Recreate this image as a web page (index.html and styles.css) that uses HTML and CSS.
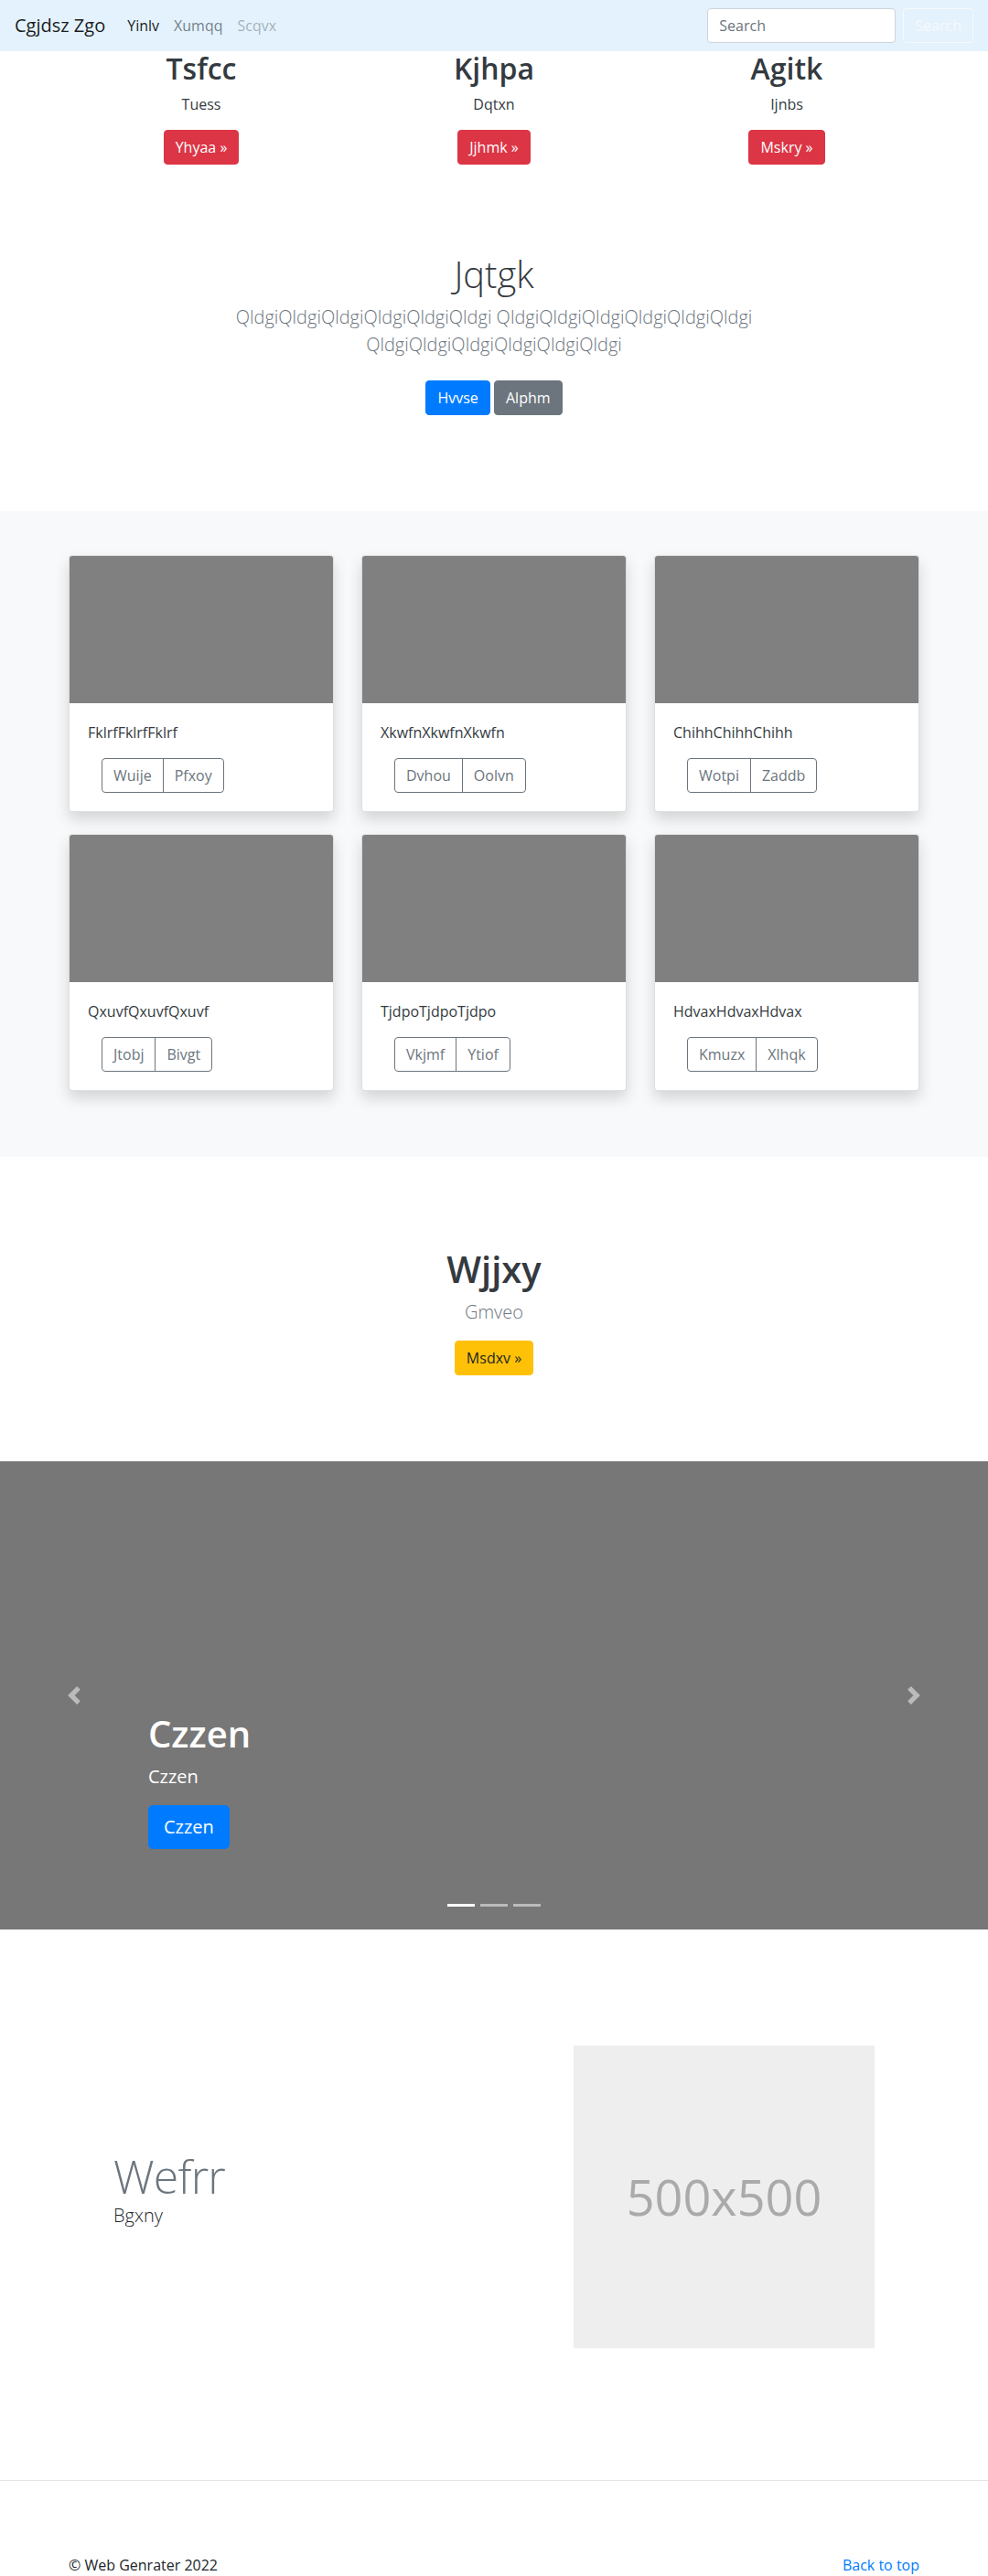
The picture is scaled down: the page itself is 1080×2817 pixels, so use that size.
FILE: index.html
```html
<!DOCTYPE html>
<html lang="en">
<head>
<meta charset="utf-8">
<title>Cgjdsz Zgo</title>
<link rel="stylesheet" href="styles.css">
</head>
<body>
<nav class="navbar">
  <a class="brand" href="#">Cgjdsz Zgo</a>
  <ul class="nav">
    <li><a class="nav-link active" href="#">Yinlv</a></li>
    <li><a class="nav-link" href="#">Xumqq</a></li>
    <li><a class="nav-link disabled" href="#">Scqvx</a></li>
  </ul>
  <form class="search">
    <input class="search-input" type="text" placeholder="Search">
    <button class="btn btn-outline-light" type="button">Search</button>
  </form>
</nav>

<section class="marketing">
  <div class="mk-col">
    <h2 class="mk-title">Tsfcc</h2>
    <p class="mk-text">Tuess</p>
    <p class="mk-action"><a class="btn btn-danger" href="#">Yhyaa &raquo;</a></p>
  </div>
  <div class="mk-col">
    <h2 class="mk-title">Kjhpa</h2>
    <p class="mk-text">Dqtxn</p>
    <p class="mk-action"><a class="btn btn-danger" href="#">Jjhmk &raquo;</a></p>
  </div>
  <div class="mk-col">
    <h2 class="mk-title">Agitk</h2>
    <p class="mk-text">Ijnbs</p>
    <p class="mk-action"><a class="btn btn-danger" href="#">Mskry &raquo;</a></p>
  </div>
</section>

<section class="jumbo">
  <h1 class="jumbo-heading">Jqtgk</h1>
  <p class="jumbo-lead">QldgiQldgiQldgiQldgiQldgiQldgi QldgiQldgiQldgiQldgiQldgiQldgi QldgiQldgiQldgiQldgiQldgiQldgi</p>
  <p class="jumbo-actions"><a class="btn btn-primary" href="#">Hvvse</a> <a class="btn btn-secondary" href="#">Alphm</a></p>
</section>

<section class="album">
  <div class="card-grid">
    <div class="card">
      <div class="card-img"></div>
      <div class="card-body">
        <p class="card-text">FklrfFklrfFklrf</p>
        <div class="btn-group"><a class="btn btn-outline-secondary" href="#">Wuije</a><a class="btn btn-outline-secondary" href="#">Pfxoy</a></div>
      </div>
    </div>
    <div class="card">
      <div class="card-img"></div>
      <div class="card-body">
        <p class="card-text">XkwfnXkwfnXkwfn</p>
        <div class="btn-group"><a class="btn btn-outline-secondary" href="#">Dvhou</a><a class="btn btn-outline-secondary" href="#">Oolvn</a></div>
      </div>
    </div>
    <div class="card">
      <div class="card-img"></div>
      <div class="card-body">
        <p class="card-text">ChihhChihhChihh</p>
        <div class="btn-group"><a class="btn btn-outline-secondary" href="#">Wotpi</a><a class="btn btn-outline-secondary" href="#">Zaddb</a></div>
      </div>
    </div>
    <div class="card">
      <div class="card-img"></div>
      <div class="card-body">
        <p class="card-text">QxuvfQxuvfQxuvf</p>
        <div class="btn-group"><a class="btn btn-outline-secondary" href="#">Jtobj</a><a class="btn btn-outline-secondary" href="#">Bivgt</a></div>
      </div>
    </div>
    <div class="card">
      <div class="card-img"></div>
      <div class="card-body">
        <p class="card-text">TjdpoTjdpoTjdpo</p>
        <div class="btn-group"><a class="btn btn-outline-secondary" href="#">Vkjmf</a><a class="btn btn-outline-secondary" href="#">Ytiof</a></div>
      </div>
    </div>
    <div class="card">
      <div class="card-img"></div>
      <div class="card-body">
        <p class="card-text">HdvaxHdvaxHdvax</p>
        <div class="btn-group"><a class="btn btn-outline-secondary" href="#">Kmuzx</a><a class="btn btn-outline-secondary" href="#">Xlhqk</a></div>
      </div>
    </div>
  </div>
</section>

<section class="cta">
  <h1 class="cta-heading">Wjjxy</h1>
  <p class="cta-lead">Gmveo</p>
  <p class="cta-action"><a class="btn btn-warning" href="#">Msdxv &raquo;</a></p>
</section>

<section class="carousel">
  <ol class="indicators">
    <li class="active"></li>
    <li></li>
    <li></li>
  </ol>
  <div class="caption">
    <h1 class="caption-title">Czzen</h1>
    <p class="caption-text">Czzen</p>
    <p class="caption-action"><a class="btn btn-lg btn-primary" href="#">Czzen</a></p>
  </div>
  <a class="control control-prev" href="#">
    <svg width="20" height="20" viewBox="0 0 8 8"><path fill="#fff" d="M5.25 0l-4 4 4 4 1.5-1.5-2.5-2.5 2.5-2.5-1.5-1.5z"/></svg>
  </a>
  <a class="control control-next" href="#">
    <svg width="20" height="20" viewBox="0 0 8 8"><path fill="#fff" d="M2.75 0l-1.5 1.5 2.5 2.5-2.5 2.5 1.5 1.5 4-4-4-4z"/></svg>
  </a>
</section>

<section class="featurette">
  <div class="feat-text">
    <h2 class="feat-heading">Wefrr</h2>
    <p class="feat-lead">Bgxny</p>
  </div>
  <div class="feat-img"><span>500x500</span></div>
</section>

<hr class="divider">

<footer class="footer">
  <p class="copy">&copy; Web Genrater 2022</p>
  <a class="top-link" href="#">Back to top</a>
</footer>
</body>
</html>
```

FILE: styles.css
```css
* { box-sizing: border-box; }

html, body {
  margin: 0;
  padding: 0;
}

body {
  font-family: "Open Sans", "Noto Sans", "Liberation Sans", sans-serif;
  font-size: 16px;
  line-height: 1.5;
  color: #212529;
  background: #fff;
}

a { text-decoration: none; }

p { margin: 0; }

h1, h2 { margin: 0; }

/* Buttons */
.btn {
  display: inline-block;
  padding: 6px 12px;
  font-size: 16px;
  line-height: 24px;
  font-weight: 400;
  font-family: inherit;
  border: 1px solid transparent;
  border-radius: 4px;
  text-align: center;
  vertical-align: middle;
  cursor: pointer;
}
.btn-lg {
  padding: 8px 16px;
  font-size: 20px;
  line-height: 30px;
  border-radius: 5px;
}
.btn-danger { background: #dc3545; border-color: #dc3545; color: #fff; }
.btn-primary { background: #007bff; border-color: #007bff; color: #fff; }
.btn-secondary { background: #6c757d; border-color: #6c757d; color: #fff; }
.btn-warning { background: #ffc107; border-color: #ffc107; color: #212529; }
.btn-outline-secondary { background: transparent; border-color: #6c757d; color: #6c757d; }
.btn-outline-light { background: transparent; border-color: #f8f9fa; color: #f8f9fa; }

/* Navbar */
.navbar {
  display: flex;
  align-items: center;
  height: 56px;
  padding: 0 16px;
  background: #e3f2fd;
}
.brand {
  font-size: 20px;
  line-height: 30px;
  margin-right: 16px;
  color: rgba(0, 0, 0, 0.9);
}
.nav {
  display: flex;
  list-style: none;
  margin: 0;
  padding: 0;
  flex: 1;
}
.nav-link {
  display: block;
  padding: 8px;
  color: rgba(0, 0, 0, 0.5);
}
.nav-link.active { color: rgba(0, 0, 0, 0.9); }
.nav-link.disabled { color: rgba(0, 0, 0, 0.3); }
.search {
  display: flex;
  align-items: center;
  margin: 0;
}
.search-input {
  width: 206px;
  height: 38px;
  padding: 6px 12px;
  margin-right: 8px;
  font-family: inherit;
  font-size: 16px;
  line-height: 24px;
  color: #495057;
  background: #fff;
  border: 1px solid #ced4da;
  border-radius: 4px;
}
.search-input::placeholder { color: #6c757d; }

/* Marketing */
.marketing {
  display: grid;
  grid-template-columns: repeat(3, 320px);
  width: 960px;
  margin: 0 auto;
}
.mk-col {
  padding: 0 15px;
  text-align: center;
}
.mk-title {
  font-size: 32px;
  font-weight: 600;
  line-height: 1.2;
  color: #343a40;
  margin-bottom: 8px;
}
.mk-text { margin-bottom: 16px; color: #343a40; }
.mk-action { margin-bottom: 16px; }

/* Jumbotron */
.jumbo {
  padding: 80px 0 81px;
  text-align: center;
}
.jumbo-heading {
  font-size: 40px;
  font-weight: 300;
  line-height: 1.2;
  color: #343a40;
  margin-bottom: 8px;
}
.jumbo-lead {
  max-width: 620px;
  margin: 0 auto 16px;
  font-size: 20px;
  font-weight: 300;
  line-height: 30px;
  color: #6c757d;
}
.jumbo-actions { margin-bottom: 16px; }
.jumbo-actions .btn { margin: 8px 0; }

/* Album */
.album {
  background: #f8f9fa;
  padding: 48px 0 72px;
}
.card-grid {
  display: grid;
  grid-template-columns: repeat(3, 290px);
  column-gap: 30px;
  row-gap: 24px;
  width: 930px;
  margin: 0 auto;
}
.card {
  background: #fff;
  border: 1px solid rgba(0, 0, 0, 0.125);
  border-radius: 4px;
  overflow: hidden;
  box-shadow: 0 8px 16px rgba(0, 0, 0, 0.15);
}
.card-img {
  height: 161px;
  background: #808080;
}
.card-body { padding: 20px; }
.card-text { margin-bottom: 16px; color: #343a40; }
.btn-group {
  display: inline-flex;
  margin-left: 15px;
}
.btn-group .btn:first-child {
  border-top-right-radius: 0;
  border-bottom-right-radius: 0;
}
.btn-group .btn + .btn {
  margin-left: -1px;
  border-top-left-radius: 0;
  border-bottom-left-radius: 0;
}

/* CTA */
.cta {
  padding: 99px 0 94px;
  text-align: center;
}
.cta-heading {
  font-size: 40px;
  font-weight: 600;
  line-height: 1.2;
  color: #343a40;
  margin-bottom: 8px;
}
.cta-lead {
  font-size: 20px;
  font-weight: 300;
  line-height: 30px;
  color: #6c757d;
  margin-bottom: 16px;
}

/* Carousel */
.carousel {
  position: relative;
  height: 512px;
  background: #777;
  overflow: hidden;
}
.indicators {
  position: absolute;
  left: 0;
  right: 0;
  bottom: 0;
  display: flex;
  justify-content: center;
  list-style: none;
  margin: 0 0 15px;
  padding: 0;
}
.indicators li {
  width: 30px;
  height: 3px;
  margin: 0 3px;
  box-sizing: content-box;
  border-top: 10px solid transparent;
  border-bottom: 10px solid transparent;
  background: #fff;
  background-clip: padding-box;
  opacity: 0.5;
}
.indicators li.active { opacity: 1; }
.caption {
  position: absolute;
  left: 15%;
  right: 15%;
  bottom: 52px;
  padding: 20px 0;
  color: #fff;
  text-align: left;
}
.caption-title {
  font-size: 40px;
  font-weight: 600;
  line-height: 1.2;
  margin-bottom: 8px;
}
.caption-text {
  font-size: 20px;
  line-height: 30px;
  margin-bottom: 16px;
}
.caption-action { margin-bottom: 16px; }
.control {
  position: absolute;
  top: 0;
  bottom: 0;
  width: 15%;
  display: flex;
  align-items: center;
  justify-content: center;
  opacity: 0.5;
}
.control svg { display: block; }
.control-prev { left: 0; }
.control-next { right: 0; }

/* Featurette */
.featurette {
  display: flex;
  align-items: center;
  width: 832px;
  margin: 0 auto;
  padding: 127px 0 144px;
}
.feat-text {
  flex: 1;
  padding-bottom: 12px;
}
.feat-heading {
  font-size: 50px;
  font-weight: 300;
  line-height: 1;
  letter-spacing: -0.8px;
  color: #6c757d;
  margin-bottom: 3px;
}
.feat-lead {
  font-size: 20px;
  font-weight: 300;
  line-height: 30px;
}
.feat-img {
  width: 329px;
  height: 331px;
  background: #eee;
  display: flex;
  align-items: center;
  justify-content: center;
  color: #aaa;
  font-size: 54px;
}

.divider {
  margin: 0;
  border: 0;
  border-top: 1px solid rgba(0, 0, 0, 0.1);
}

/* Footer */
.footer {
  display: flex;
  justify-content: space-between;
  align-items: baseline;
  width: 930px;
  margin: 0 auto;
  padding: 80px 0 48px;
}
.copy { color: #212529; }
.top-link { color: #007bff; }
```
